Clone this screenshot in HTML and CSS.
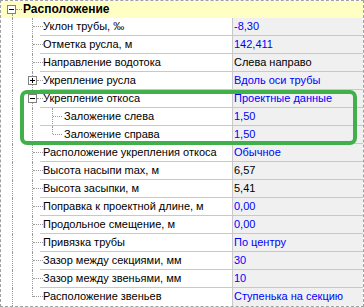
FILE: index.html
```html
<!DOCTYPE html>
<html lang="ru">
<head>
    <meta charset="UTF-8">
    <title>Свойства трубы</title>
    <link rel="stylesheet" href="styles.css">
</head>
<body>
    <div class="grid">
        <div class="group-head">
            <span class="exp minus"></span>
            Расположение
        </div>

        <div class="row">
            <span class="gutter"><i class="tick"></i></span>
            <span class="name">Уклон трубы, ‰</span>
            <span class="value">-8,30</span>
        </div>
        <div class="row">
            <span class="gutter"><i class="tick"></i></span>
            <span class="name">Отметка русла, м</span>
            <span class="value">142,411</span>
        </div>
        <div class="row">
            <span class="gutter"><i class="tick"></i></span>
            <span class="name">Направление водотока</span>
            <span class="value plain">Слева направо</span>
        </div>
        <div class="row">
            <span class="gutter"><i class="tick short"></i><span class="exp plus"></span></span>
            <span class="name">Укрепление русла</span>
            <span class="value">Вдоль оси трубы</span>
        </div>
        <div class="row">
            <span class="gutter"><i class="tick short"></i><span class="exp minus"></span></span>
            <span class="name">Укрепление откоса</span>
            <span class="value">Проектные данные</span>
        </div>
        <div class="row">
            <span class="gutter"></span>
            <span class="name sub">Заложение слева</span>
            <span class="value">1,50</span>
        </div>
        <div class="row">
            <span class="gutter"></span>
            <span class="name sub sub-last">Заложение справа</span>
            <span class="value">1,50</span>
        </div>
        <div class="row">
            <span class="gutter"><i class="tick"></i></span>
            <span class="name">Расположение укрепления откоса</span>
            <span class="value">Обычное</span>
        </div>
        <div class="row">
            <span class="gutter"><i class="tick"></i></span>
            <span class="name">Высота насыпи max, м</span>
            <span class="value plain">6,57</span>
        </div>
        <div class="row">
            <span class="gutter"><i class="tick"></i></span>
            <span class="name">Высота засыпки, м</span>
            <span class="value plain">5,41</span>
        </div>
        <div class="row">
            <span class="gutter"><i class="tick"></i></span>
            <span class="name">Поправка к проектной длине, м</span>
            <span class="value">0,00</span>
        </div>
        <div class="row">
            <span class="gutter"><i class="tick"></i></span>
            <span class="name">Продольное смещение, м</span>
            <span class="value">0,00</span>
        </div>
        <div class="row">
            <span class="gutter"><i class="tick"></i></span>
            <span class="name">Привязка трубы</span>
            <span class="value">По центру</span>
        </div>
        <div class="row">
            <span class="gutter"><i class="tick"></i></span>
            <span class="name">Зазор между секциями, мм</span>
            <span class="value">30</span>
        </div>
        <div class="row">
            <span class="gutter"><i class="tick"></i></span>
            <span class="name">Зазор между звеньями, мм</span>
            <span class="value">10</span>
        </div>
        <div class="row last">
            <span class="gutter"><i class="tick"></i></span>
            <span class="name">Расположение звеньев</span>
            <span class="value">Ступенька на секцию</span>
        </div>

        <!-- выделение группы "Укрепление откоса" -->
        <div class="highlight"></div>
    </div>
</body>
</html>
```

FILE: styles.css
```css
body {
    margin: 0;
    background: #ffffff;
}

.grid {
    position: relative;
    width: 364px;
    height: 307px;
    box-sizing: border-box;
    border: 1px dashed #a0a0a0;
    overflow: hidden;
    font-family: "Liberation Sans", Arial, sans-serif;
    font-size: 11px;
    color: #000000;
    background: #ffffff;
}

/* заголовок группы */
.group-head {
    position: relative;
    height: 17px;
    line-height: 17px;
    padding-left: 22px;
    background: #ffffc4;
    font-size: 12px;
    font-weight: bold;
}

.group-head::before {
    content: "";
    position: absolute;
    left: 15px;
    top: 8px;
    width: 6px;
    border-top: 1px dotted #999999;
}

.group-head::after {
    content: "";
    position: absolute;
    left: 11px;
    top: 13px;
    bottom: 0;
    border-left: 1px dotted #999999;
}

.group-head .exp {
    left: 6px;
    top: 4px;
}

/* строки */
.row {
    display: grid;
    grid-template-columns: 39px 192px 1fr;
    height: 18px;
}

.gutter {
    position: relative;
}

.gutter::before,
.gutter::after {
    content: "";
    position: absolute;
    top: 0;
    bottom: 0;
    border-left: 1px dotted #999999;
}

.gutter::before {
    left: 11px;
}

.gutter::after {
    left: 31px;
}

.row.last .gutter::after {
    bottom: 9px;
}

.tick {
    position: absolute;
    left: 32px;
    top: 8px;
    width: 10px;
    border-top: 1px dotted #999999;
    z-index: 1;
}

.tick.short {
    left: 36px;
    width: 6px;
}

.name,
.value {
    box-sizing: border-box;
    border-bottom: 1px solid #c8c8c8;
    line-height: 17px;
    white-space: nowrap;
    overflow: hidden;
}

.name {
    position: relative;
    padding-left: 3px;
}

.name.sub {
    padding-left: 24px;
}

.name.sub::before {
    content: "";
    position: absolute;
    left: 12px;
    top: 0;
    bottom: -1px;
    border-left: 1px dotted #999999;
}

.name.sub-last::before {
    bottom: 9px;
}

.name.sub::after {
    content: "";
    position: absolute;
    left: 13px;
    top: 8px;
    width: 9px;
    border-top: 1px dotted #999999;
}

.value {
    border-left: 1px solid #c8c8c8;
    background: #f0f0f0;
    padding-left: 1px;
    color: #0000ff;
}

.value.plain {
    color: #000000;
}

.row.last .name,
.row.last .value {
    border-bottom: none;
}

/* кнопки свернуть/развернуть */
.exp {
    position: absolute;
    left: 27px;
    top: 4px;
    width: 9px;
    height: 9px;
    box-sizing: border-box;
    border: 1px solid #808080;
    background: #ffffff;
    z-index: 2;
}

.exp::before {
    content: "";
    position: absolute;
    left: 1px;
    top: 3px;
    width: 5px;
    height: 1px;
    background: #000000;
}

.exp.plus::after {
    content: "";
    position: absolute;
    left: 3px;
    top: 1px;
    width: 1px;
    height: 5px;
    background: #000000;
}

.highlight {
    position: absolute;
    left: 19px;
    top: 89px;
    width: 337px;
    height: 55px;
    box-sizing: border-box;
    border: 4px solid #41b04a;
    border-radius: 7px;
    pointer-events: none;
}
```
